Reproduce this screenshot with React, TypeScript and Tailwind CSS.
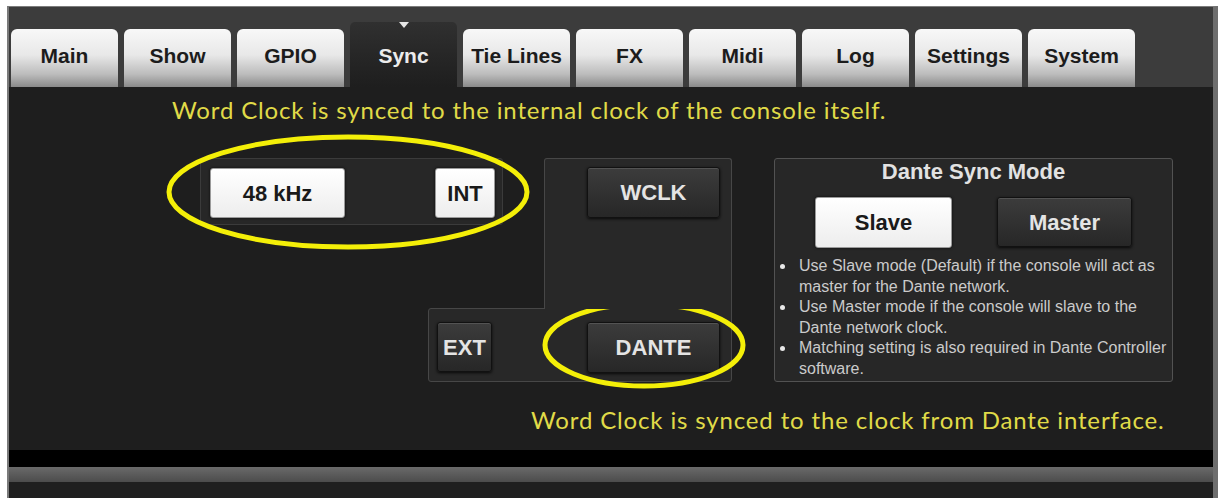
const tabs = ['Main', 'Show', 'GPIO', 'Sync', 'Tie Lines', 'FX', 'Midi', 'Log', 'Settings', 'System'];

function Tab({ label, active }: { label: string; active?: boolean }) {
  if (active) {
    return (
      <div className="flex h-[65px] w-[107px] flex-col items-center rounded-t-[5px] bg-gradient-to-b from-[#303030] to-[#1e1e1e]">
        <div className="h-0 w-0 border-x-[5px] border-t-[6px] border-x-transparent border-t-[#e6e6e6]" />
        <span className="mt-[16px] text-[21px] font-bold leading-[24px] text-[#ececec]">{label}</span>
      </div>
    );
  }
  return (
    <div className="flex h-[58px] w-[107px] justify-center rounded-t-[6px] bg-[linear-gradient(to_bottom,#f8f8f8_0%,#e8e8e8_45%,#bcbcbc_78%,#8a8a8a_100%)] pt-[15px]">
      <span className="text-[21px] font-bold leading-[24px] text-[#1c1c1c]">{label}</span>
    </div>
  );
}

function WhiteBtn({ label, className = '' }: { label: string; className?: string }) {
  return (
    <div
      className={`flex items-center justify-center rounded-[3px] border border-[#9a9a9a] bg-gradient-to-b from-white to-[#ededed] text-[22px] font-bold text-[#1a1a1a] shadow-[0_0_3px_rgba(0,0,0,0.7)] ${className}`}
    >
      {label}
    </div>
  );
}

function DarkBtn({ label, className = '' }: { label: string; className?: string }) {
  return (
    <div
      className={`flex items-center justify-center rounded-[3px] border border-[#111] bg-gradient-to-b from-[#3c3c3c] to-[#272727] text-[22px] font-bold text-[#e4e4e4] shadow-[inset_0_1px_0_rgba(255,255,255,0.12),0_1px_3px_rgba(0,0,0,0.8)] ${className}`}
    >
      {label}
    </div>
  );
}

const notes = [
  'Use Slave mode (Default) if the console will act as master for the Dante network.',
  'Use Master mode if the console will slave to the Dante network clock.',
  'Matching setting is also required in Dante Controller software.',
];

export default function App() {
  return (
    <div className="h-[498px] w-[1223px] overflow-hidden bg-white pl-[7px] pr-[5px] pt-[6px] font-['Liberation_Sans',Arial,sans-serif]">
      <div className="flex h-[492px] flex-col border-l-2 border-r-[5px] border-t border-l-[#7a7a7a] border-r-[#6e6e6e] border-t-[#7c7c7c]">
        {/* tab strip */}
        <div className="flex h-[80px] items-end gap-[6px] bg-[#3c3c3c] pl-[2px]">
          {tabs.map((t) => (
            <Tab key={t} label={t} active={t === 'Sync'} />
          ))}
        </div>

        {/* sync page */}
        <div className="flex h-[363px] flex-col bg-[#1e1e1e]">
          <p className="ml-[163px] mt-[9px] font-['Lato',sans-serif] text-[24px] leading-[28px] tracking-[0.85px] text-[#e0db48]">
            Word Clock is synced to the internal clock of the console itself.
          </p>

          <div className="relative ml-[191px] mt-[34px] grid w-[973px] grid-cols-[228px_75px_41px_188px_42px_399px] grid-rows-[67px_83px_74px]">
            {/* rate + INT */}
            <div className="col-span-2 col-start-1 row-start-1 flex items-start justify-between rounded-[3px] border border-[#3b3b3b] bg-[#272727] pl-[9px] pr-[7px] pt-[9px]">
              <WhiteBtn label="48 kHz" className="h-[50px] w-[135px]" />
              <WhiteBtn label="INT" className="h-[50px] w-[60px]" />
            </div>

            {/* L-shaped source panel */}
            <div className="relative z-10 col-start-4 row-span-2 row-start-1 -mb-px flex items-start justify-end rounded-t-[3px] border border-b-0 border-[#474747] bg-[#282828] pr-[11px] pt-[8px]">
              <DarkBtn label="WCLK" className="h-[51px] w-[133px]" />
            </div>
            <div className="col-span-3 col-start-2 row-start-3 flex items-start justify-between rounded-b-[3px] rounded-tl-[3px] border border-[#474747] bg-[#282828] pl-[8px] pr-[11px] pt-[13px]">
              <DarkBtn label="EXT" className="h-[50px] w-[55px]" />
              <DarkBtn label="DANTE" className="h-[51px] w-[133px]" />
            </div>

            {/* Dante sync mode */}
            <div className="col-start-6 row-span-3 row-start-1 flex flex-col items-center rounded-[3px] border border-[#525252] bg-[#272727]">
              <div className="text-[22px] font-bold leading-[26px] text-[#e2e2e2]">Dante Sync Mode</div>
              <div className="mt-[12px] flex gap-[45px]">
                <WhiteBtn label="Slave" className="h-[51px] w-[137px]" />
                <DarkBtn label="Master" className="h-[50px] w-[135px]" />
              </div>
              <ul className="mt-[8px] self-stretch pl-[5px]">
                {notes.map((n) => (
                  <li key={n} className="flex items-start">
                    <span className="mt-[8px] h-[5px] w-[5px] shrink-0 rounded-full bg-[#e8e8e8]" />
                    <span className="ml-[14px] w-[372px] text-[16px] leading-[20.6px] text-[#cbcbcb]">{n}</span>
                  </li>
                ))}
              </ul>
            </div>

            {/* annotation rings */}
            <svg className="pointer-events-none absolute left-[-35px] top-[-25px]" width="366" height="118">
              <ellipse cx="183" cy="59" rx="179" ry="55" fill="none" stroke="#f4ef08" strokeWidth="5" />
            </svg>
            <svg className="pointer-events-none absolute left-[340px] top-[141px]" width="208" height="92">
              <ellipse cx="104" cy="46" rx="99" ry="41" fill="none" stroke="#f4ef08" strokeWidth="5" />
            </svg>
          </div>

          <p className="ml-[522px] mt-[24px] font-['Lato',sans-serif] text-[24px] leading-[28px] tracking-[0.85px] text-[#e0db48]">
            Word Clock is synced to the clock from Dante interface.
          </p>
        </div>

        <div className="h-[17px] bg-black" />
        <div className="h-[15px] bg-gradient-to-b from-[#6a6a6a] to-[#4c4c4c]" />
        <div className="flex-1 bg-[#1f1f1f]" />
      </div>
    </div>
  );
}
